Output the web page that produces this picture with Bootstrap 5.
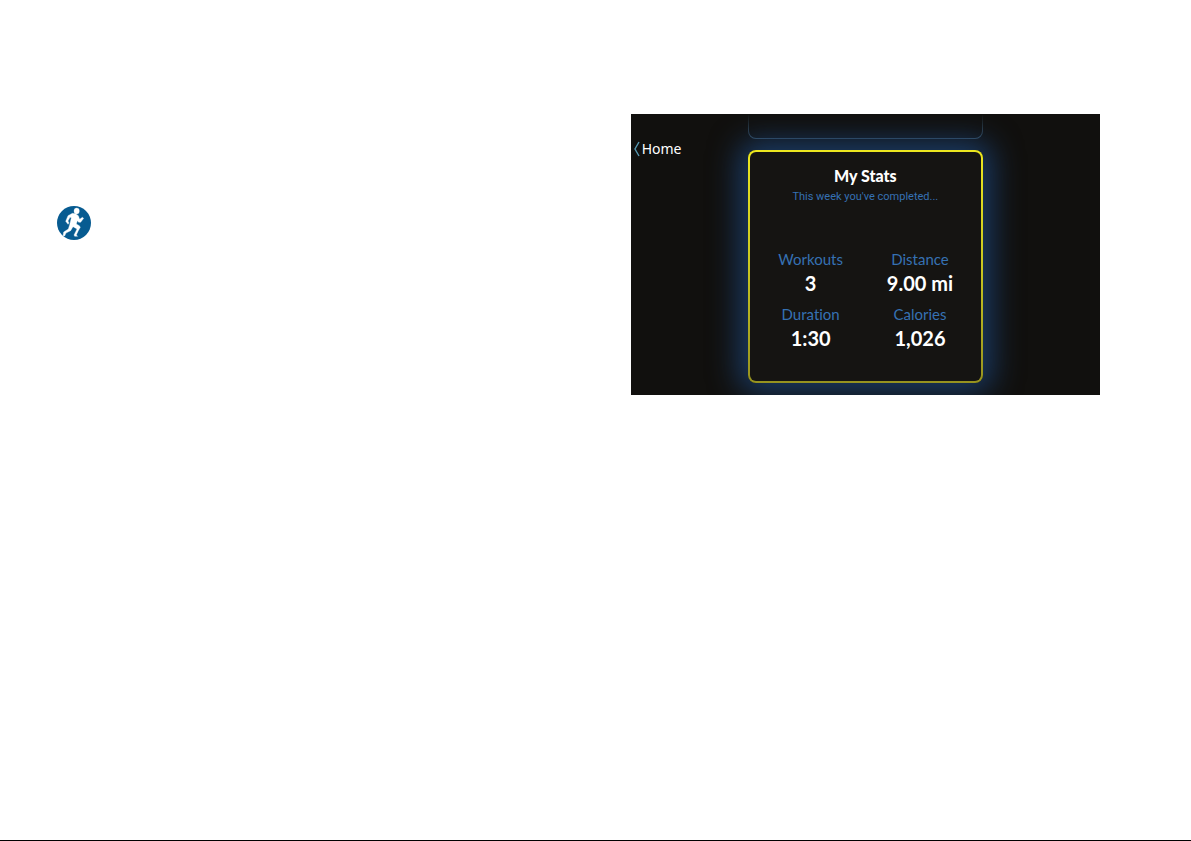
<!DOCTYPE html>
<html lang="en">
<head>
<meta charset="utf-8">
<meta name="viewport" content="width=device-width, initial-scale=1">
<title>My Stats</title>
<link href="https://cdn.jsdelivr.net/npm/bootstrap@5.3.0/dist/css/bootstrap.min.css" rel="stylesheet">
<style>
body { font-family: Lato, "Open Sans", sans-serif; font-variant-ligatures: none; background: #fff; color: #fff; }
.sheet { border-bottom: 1px solid #000; }
.spread { display: grid; grid-template-columns: 55fr 45fr; padding: 114px 91px 0 57px; }
.runner { width: 34px; height: 34px; margin-top: 92px; }
.screen { display: grid; grid-template-columns: 1fr 2fr 1fr; background: #11100e; height: 281px; }
.home { margin: 24px 0 0 3px; font: 14px/22px "Noto Sans", sans-serif; color: #fff; gap: 2px; }
.prev-card { height: 25px; margin-bottom: 11px; border-radius: 0 0 8px 8px;
  background: linear-gradient(#11100e, #11100e) padding-box, linear-gradient(#11100e, #3a5568) border-box;
  border: 1px solid transparent; border-top: 0; }
.stats { height: 233px; border: 2px solid transparent; border-radius: 8px;
  background: linear-gradient(#151412, #151412) padding-box, linear-gradient(#ece71f, #c9c720 50%, #96921f) border-box;
  box-shadow: 0 0 30px 9px #1a3b66; padding: 14px 6px; }
.title { font-size: 16px; line-height: 20px; font-weight: 900; }
.note { font: 11px/16px Roboto, sans-serif; margin: 3px 0 44px; color: #3571b3; }
.figures { display: grid; grid-template-columns: 1fr 1fr; row-gap: 9px; }
.figures dt { font-size: 15px; line-height: 20px; font-weight: 400; color: #3571b3; }
.figures dd { font-size: 20px; line-height: 24px; font-weight: 700; padding-top: 2px; }
</style>
</head>
<body>
<div class="sheet min-vh-100">
  <main class="spread">
    <div>
      <svg class="runner d-block" viewBox="21 17 102 102" role="img" aria-label="Runner">
        <circle cx="72" cy="68" r="51" fill="#075b91"/>
        <g fill="#fff" stroke="#fff" stroke-width="1">
          <ellipse cx="80" cy="32" rx="8" ry="9"/>
          <path d="M67 39 L77 40 L85 46 L89 57 L97 51 L101 54 L92 66 L86 66 L82 61 L79 71 L88 76 L91 81 L85 91 L79 104 L83 108 L74 108 L72 104 L81 86 L69 79 L62 91 L48 98 L44 107 L39 106 L41 95 L55 86 L59 73 L64 52 L60 51 L54 62 L57 68 L54 72 L47 63 L54 46 Z"/>
        </g>
      </svg>
    </div>
    <section class="screen overflow-hidden">
      <a href="#" class="home d-flex align-self-start align-items-center text-decoration-none">
        <svg width="6" height="20" viewBox="0 0 6 20" fill="none" stroke="#5798b2" stroke-width="1.4" aria-hidden="true"><path d="M5 3 L1 10 L5 17"/></svg>
        Home
      </a>
      <div>
        <div class="prev-card"></div>
        <article class="stats text-center">
          <h1 class="title mb-0">My Stats</h1>
          <p class="note">This week you've completed...</p>
          <dl class="figures mb-0">
            <div><dt>Workouts</dt><dd class="mb-0">3</dd></div>
            <div><dt>Distance</dt><dd class="mb-0">9.00 mi</dd></div>
            <div><dt>Duration</dt><dd class="mb-0">1:30</dd></div>
            <div><dt>Calories</dt><dd class="mb-0">1,026</dd></div>
          </dl>
        </article>
      </div>
    </section>
  </main>
</div>
<script src="https://cdn.jsdelivr.net/npm/bootstrap@5.3.0/dist/js/bootstrap.bundle.min.js"></script>
</body>
</html>
